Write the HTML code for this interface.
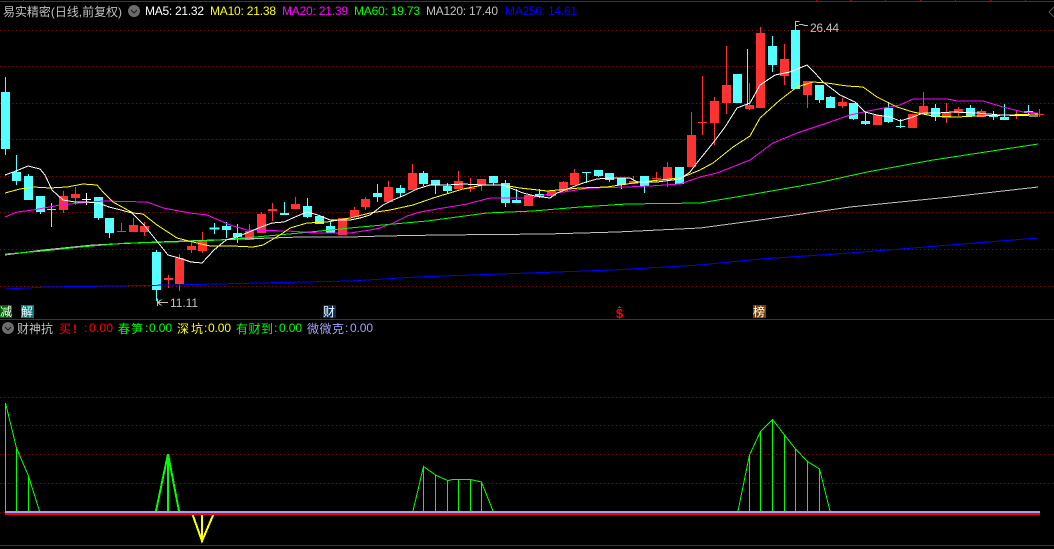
<!DOCTYPE html>
<html><head><meta charset="utf-8"><style>
html,body{margin:0;padding:0;background:#000;width:1054px;height:549px;overflow:hidden}
svg{display:block}
text{font-family:"WenQuanYi Zen Hei","Liberation Sans","Noto Sans CJK SC",sans-serif;font-size:12px}
.n{font-family:"Liberation Sans",sans-serif}
</style></head><body>
<svg width="1054" height="549" viewBox="0 0 1054 549" xmlns="http://www.w3.org/2000/svg">
<rect width="1054" height="549" fill="#000"/>
<g shape-rendering="crispEdges">
<path d="M0 30.5H1054M0 66.5H1054M0 103.5H1054M0 139.5H1054M0 176.5H1054M0 212.5H1054M0 249.5H1054M0 286.5H1054M0 397.5H1054M0 425.5H1054M0 454.5H1054M0 483.5H1054M0 512.5H5" stroke="#7a0c0c" stroke-width="1" stroke-dasharray="1 3" fill="none"/>
<path d="M0 1.5H1054M0 319.5H1054M0 545.5H1054" stroke="#c00000" stroke-width="1" fill="none"/>
<path d="M23.5 0V2M816.5 0V2M850.5 0V2M885.5 0V2M920.5 0V2M955.5 0V2M990.5 0V2M1025.5 0V2" stroke="#b00000" fill="none"/>

<!-- cyan wicks -->
<path fill="none" stroke="#54ffff" stroke-width="1" d="M5.5 77V155M16.5 155V185M28.5 174V200M40.5 196V214M51.5 203V227M47 209.5h9M98.5 197V220M109.5 218V238M156.5 250V301M214.5 223V234M210 228h9v1h-9zM226.5 222V238M237.5 224V243M284.5 202V215M307.5 198V218M330.5 222V233M377.5 184V202M400.5 185V197M423.5 171V186M435.5 180V194M447.5 183V193M493.5 176V185M505.5 180V207M516.5 189V203M539.5 189V198M586.5 172V183M582 172.5h9M598.5 170V177M609.5 173V182M621.5 178V189M644.5 176V193M747.5 49V107M772.5 36V72M819.5 85V103M830.5 96V108M853.5 103V120M865.5 112V125M888.5 102V123M900.5 119V128M896 126.5h9M935.5 104V121M970.5 105V116M993.5 111V120M989 116.5h9M1004.5 104V120M1028.5 105V114"/>
<!-- cyan bodies -->
<path fill="none" stroke="#54ffff" stroke-width="9" d="M5.5 92V149M16.5 172V181M28.5 176V200M40.5 196V212M98.5 197V218M109.5 218V233M156.5 252V290M226.5 226V230M237.5 233V237M284.5 213V215M307.5 206V217M319.5 216V224M330.5 226V233M377.5 193V197M400.5 188V193M423.5 173V184M435.5 180V185M447.5 186V191M493.5 176V183M505.5 183V203M516.5 200V203M598.5 170V176M609.5 173V180M621.5 178V185M644.5 176V186M679.5 167V184M737.5 74V103M772.5 46V65M795.5 30V89M819.5 85V100M830.5 97V108M853.5 103V119M865.5 121V124M888.5 108V122M935.5 108V117M970.5 108V116M1004.5 117V120M1028.5 111V113"/>
<path fill="none" stroke="#54ffff" stroke-width="3" d="M535 195.5h9"/>
<!-- red wicks -->
<path fill="none" stroke="#ff3232" stroke-width="1" d="M63.5 191V213M75.5 187V205M121.5 223V231M117 231.5h9M133.5 218V232M144.5 222V236M168.5 275V288M179.5 254V291M191.5 240V253M202.5 232V253M249.5 224V240M261.5 212V233M272.5 203V221M295.5 197V209M354.5 207V217M365.5 197V210M388.5 181V202M412.5 164V190M458.5 171V189M470.5 178V192M466 188.5h9M481.5 179V191M551.5 191V198M563.5 181V191M574.5 169V185M633.5 176V184M656.5 172V182M652 178.5h9M667.5 162V187M691.5 112V167M702.5 76V135M698 122.5h9M714.5 97V145M726.5 46V114M749.5 83V110M760.5 27V108M784.5 44V85M807.5 81V108M842.5 98V108M923.5 92V114M946.5 103V123M958.5 107V116M981.5 109V117M1016.5 111V119M1012 115.5h9M1039.5 109V117M1035 114.5h9"/>
<path fill="none" stroke="#ff3232" stroke-width="2" d="M164 279h9M268 210h9"/>
<!-- red bodies -->
<path fill="none" stroke="#ff3232" stroke-width="9" d="M63.5 196V210M75.5 194V198M133.5 225V232M144.5 226V232M179.5 258V284M191.5 246V250M202.5 241V251M249.5 231V240M261.5 214V233M295.5 204V209M342.5 218V235M354.5 210V217M365.5 199V207M388.5 187V202M412.5 173V190M458.5 181V189M481.5 179V185M528.5 195V206M551.5 191V196M563.5 182V191M574.5 173V185M633.5 181V184M667.5 167V180M691.5 135V167M714.5 101V123M726.5 85V103M749.5 105V109M760.5 33V108M784.5 59V76M807.5 81V95M842.5 102V106M877.5 115V125M912.5 114V128M923.5 106V114M946.5 112V118M958.5 109V113M981.5 111V117"/>
<path fill="none" stroke="#ffffff" stroke-width="1" d="M86.5 193V205M82 199.5h9"/>

<!-- moving averages -->
<g fill="none" stroke-width="1">
<polyline stroke="#0000ff" points="5,289 47,287 113,286 173,285 260,283 350,281 417,277 500,274 613,270 700,265 760,259 850,253 950,245 1038,238"/>
<polyline stroke="#c0c0c0" stroke-width="1" points="5,255 43,250 93,245 157,242 300,237 350,237 383,236 440,235 547,234 617,232 700,228 760,220 850,207 950,197 1038,187"/>
<polyline stroke="#00ff00" points="5,254 43,251 80,247 127,243 173,242 220,240 267,236 300,233 350,228 383,225 427,221 487,213 533,211 580,207 627,204 700,203 760,193 817,183 867,172 933,160 1038,144"/>
<polyline stroke="#ff00ff" points="5,217 17,212 33,210 60,205 80,203 103,201 147,202 163,208 190,213 207,215 230,225 247,230 287,231 320,233 350,233 370,230 380,228 393,223 407,216 420,212 443,208 467,204 490,198 530,198 550,194 570,191 590,188 627,187 650,186 680,184 700,177 717,173 750,160 773,143 797,133 827,123 850,115 873,110 900,105 913,99 947,99 957,101 983,101 1003,107 1023,112 1038,113"/>
<polyline stroke="#ffff00" points="5,193 20,189 33,187 50,188 67,187 83,184 97,185 103,192 113,202 133,213 143,214 157,225 177,238 197,243 210,246 233,246 253,247 263,245 280,235 290,228 307,223 327,222 350,218 370,213 390,210 413,205 433,198 463,189 483,185 503,185 520,188 547,191 580,188 607,187 620,185 640,182 670,179 683,177 700,170 713,163 733,147 750,136 760,118 780,100 797,87 813,82 827,83 847,86 863,87 877,97 897,107 913,112 933,116 957,117 977,116 1038,114"/>
<polyline stroke="#ffffff" points="5,175 16,171 28,166 40,169 45,175 52,190 63,200 75,202 86,202 98,203 109,207 121,210 132,213 144,225 156,240 168,255 179,258 191,262 202,263 214,250 226,240 237,237 249,232 261,227 272,223 284,222 295,217 307,212 318,215 330,220 350,220 360,218 370,215 383,205 393,200 405,195 417,189 430,185 447,185 463,184 483,185 503,185 513,189 523,193 535,196 550,198 557,193 570,188 583,183 597,179 610,178 630,178 637,182 657,182 680,179 690,172 700,159 713,143 725,127 737,108 750,103 760,85 775,75 790,72 807,65 815,73 823,82 840,95 855,102 865,112 877,115 890,117 900,121 913,117 923,113 937,113 953,112 977,113 1000,115 1038,116"/>
</g>

<!-- annotations -->
<path fill="none" stroke="#c0c0c0" d="M795.5 21V30M795.5 21.5h4M795.5 25.5h3M799 24.5h3l3 1h3M157 302.5h11M157.5 298.5V306M157.5 302.5l4-3M157.5 302.5l4 3"/>
<path fill="none" stroke="#555" d="M1054 7l-5 5 5 5"/>

<!-- lower pane -->
<g fill="none" stroke="#00ff00" stroke-width="1">
<polyline points="5.5,511 5.5,403 16.5,448 28.5,476 39.5,511"/>
<path d="M16.5 448V511M28.5 476V511"/>
<polyline points="413,511 423.5,466.5 435.5,475 447.5,480.5 453,479.5 470.5,479.5 481.5,482 493,511"/>
<path d="M423.5 467V511M435.5 475V511M447.5 481V511M458.5 480V511M470.5 480V511M481.5 482V511"/>
<polyline points="738,511 749.5,455 760.5,431.5 772.5,419.5 784.5,435 795.5,449 807.5,461.5 819.5,469 830,511"/>
<path d="M749.5 455V511M760.5 432V511M772.5 420V511M784.5 435V511M795.5 449V511M807.5 462V511M819.5 469V511"/>
<polyline stroke-width="2" points="156,511 168,454 179,511"/>
<path stroke-width="2" d="M168 454V511"/>
</g>
<g fill="none" stroke="#ffff00" stroke-width="2">
<polyline points="192,513 202,541 214,513"/>
<path d="M202 513V541"/>
</g>
<rect x="5" y="513" width="1035" height="2" fill="#ff0000"/>
<rect x="5" y="511" width="1035" height="2" fill="#a0a0ff"/>

<!-- signal tags -->
<rect x="0" y="305" width="12" height="13" fill="#006400"/>
<rect x="21" y="305" width="13" height="13" fill="#007878"/>
<rect x="323" y="305" width="13" height="13" fill="#00305e"/>
<rect x="753" y="305" width="13" height="13" fill="#7a4000"/>
</g>
<text x="0" y="316" fill="#fff">减</text>
<text x="21" y="316" fill="#fff">解</text>
<text x="323" y="316" fill="#fff">财</text>
<text x="753" y="316" fill="#fff">榜</text>
<text class="n" x="616" y="318" fill="#f00" font-weight="bold" style="font-size:13px">$</text>
<path d="M619 306.5h1M618 307.5h3" stroke="#f00" fill="none" shape-rendering="crispEdges"/>

<!-- header -->
<text x="3" y="16" fill="#c0c0c0" textLength="119" lengthAdjust="spacingAndGlyphs">易实精密(日线,前复权)</text>
<circle cx="134" cy="11" r="6" fill="#6c6c6c"/>
<path d="M131 10l3 3 3-3" fill="none" stroke="#222" stroke-width="1.2"/>
<text class="n" x="145" y="15" fill="#fff" textLength="59">MA5: 21.32</text>
<text class="n" x="210" y="15" fill="#ffff00" textLength="66">MA10: 21.38</text>
<text class="n" x="282" y="15" fill="#ff00ff" textLength="66">MA20: 21.39</text>
<text class="n" x="354" y="15" fill="#00ff00" textLength="66">MA60: 19.73</text>
<text class="n" x="426" y="15" fill="#c0c0c0" textLength="72">MA120: 17.40</text>
<text class="n" x="505" y="15" fill="#0000ff" textLength="72">MA250: 14.61</text>
<text class="n" x="810" y="32" fill="#c0c0c0" textLength="29">26.44</text>
<text class="n" x="170" y="307" fill="#c0c0c0" textLength="28">11.11</text>

<!-- lower header -->
<circle cx="8" cy="328" r="6" fill="#6c6c6c"/>
<path d="M5 327l3 3 3-3" fill="none" stroke="#222" stroke-width="1.2"/>
<text x="17" y="333" fill="#c0c0c0" textLength="36">财神抗</text>
<text x="59" y="333" fill="#ff0000">买</text>
<text x="73" y="333" fill="#ff0000" font-weight="bold">!</text>
<text class="n" x="84" y="332" fill="#ff0000">:</text>
<text class="n" x="89" y="332" fill="#ff0000" textLength="24">0.00</text>
<text x="118" y="333" fill="#00ff00" textLength="25">春笋</text>
<text class="n" x="145" y="332" fill="#00ff00">:</text>
<text class="n" x="149" y="332" fill="#00ff00" textLength="23">0.00</text>
<text x="177" y="333" fill="#ffff00" textLength="26">深坑</text>
<text class="n" x="204" y="332" fill="#ffff00">:</text>
<text class="n" x="208" y="332" fill="#ffff00" textLength="23">0.00</text>
<text x="236" y="333" fill="#00ff00" textLength="37">有财到</text>
<text class="n" x="274" y="332" fill="#00ff00">:</text>
<text class="n" x="279" y="332" fill="#00ff00" textLength="23">0.00</text>
<text x="307" y="333" fill="#a0a0ff" textLength="37">微微克</text>
<text class="n" x="345" y="332" fill="#a0a0ff">:</text>
<text class="n" x="350" y="332" fill="#a0a0ff" textLength="23">0.00</text>
</svg>
</body></html>
